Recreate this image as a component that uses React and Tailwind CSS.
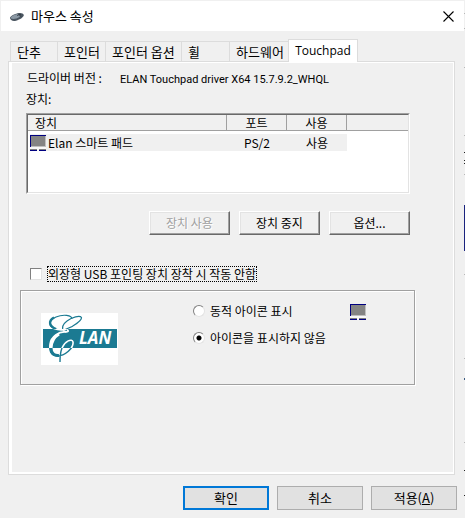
import { useState } from "react";

const tabs = [
  { name: "단추", width: "w-[47px]" },
  { name: "포인터", width: "w-[48px]" },
  { name: "포인터 옵션", width: "w-[76px]" },
  { name: "휠", width: "w-[48px]" },
  { name: "하드웨어", width: "w-[59px]" },
  { name: "Touchpad", width: "w-[70px]" },
];

// pieces of the window behind this one: [y, height, colour]
const edgeMarks = [
  [13, 1, "#b8b8b8"],
  [28, 1, "#b8b8b8"],
  [67, 1, "#b8b8b8"],
  [135, 1, "#b8b8b8"],
  [152, 1, "#222222"],
  [160, 1, "#222222"],
  [163, 1, "#222222"],
  [174, 1, "#b8b8b8"],
  [205, 46, "#1a237e"],
  [274, 1, "#b8b8b8"],
  [358, 1, "#b8b8b8"],
  [378, 2, "#3a5a80"],
  [442, 1, "#b8b8b8"],
  [470, 1, "#222222"],
  [495, 1, "#222222"],
];

function MouseIcon() {
  return (
    <svg className="w-4 h-4 shrink-0" viewBox="0 0 16 16" aria-hidden="true">
      <path d="M1 9.500C2 7.500 5 6 9 5.200C12 4.600 14.500 5.500 14.800 7C15 9 11 11.500 7 12.700C4 13.500 1 12.500 1 9.500Z" fill="#4a5560" />
      <path d="M2 9C4 7 7 6.200 9 6C11 7 11 8 10.500 9C8 10.800 4 11.500 2 10.500Z" fill="#8b98a4" />
      <path d="M9 5.600L12 8.600M8 7.500L12 6.200" stroke="#2c353e" strokeWidth="0.8" />
    </svg>
  );
}

function PadIcon() {
  return (
    <svg className="w-4 h-4 shrink-0" viewBox="0 0 16 16" shapeRendering="crispEdges" aria-hidden="true">
      <rect width="16" height="12" fill="#000080" />
      <rect x="1" y="1" width="15" height="11" fill="#c0c0c0" />
      <rect x="1" y="1" width="14" height="10" fill="#848484" />
      <rect y="12" width="16" height="4" fill="#f8f8f8" />
      <rect y="14" width="7" height="1" fill="#808080" />
      <rect x="9" y="14" width="7" height="1" fill="#808080" />
      <rect y="15" width="7" height="1" fill="#000080" />
      <rect x="9" y="15" width="7" height="1" fill="#000080" />
    </svg>
  );
}

function ElanLogo() {
  const top =
    "M31 6C31 2 22 1 15 4C8 7 7 13 13 15.500C17 17 24 17.500 30 14C35 11 41 8 40.500 4.500C39 2 31 4 26 8C22 11 20 15 23 18C26 20 29 18 26 17";
  const bottom =
    "M25 19C18 18 10 24 9 31C8 39 11 43 16 43C24 43 33 35 32 29C31 25 24 28 21 35C19 40 19 44 19 49";
  return (
    <svg className="w-[77px] h-[52px]" viewBox="0 0 77 52" role="img" aria-label="ELAN">
      <defs>
        <clipPath id="band">
          <rect x="2" y="16" width="74" height="19" />
        </clipPath>
      </defs>
      <rect width="77" height="52" fill="#ffffff" />
      <rect x="2" y="16" width="74" height="19" fill="#1b7a92" />
      <g fill="none" stroke="#1b7a92">
        <path d={top} strokeWidth="1.2" />
        <path d={bottom} strokeWidth="1.4" />
        <path d="M13 4.500C7 8 8 13 15 16" strokeWidth="2.400" />
        <path d="M10 35C10 41 14 43 18 42.500" strokeWidth="3" />
      </g>
      <g clipPath="url(#band)" fill="none" stroke="#ffffff">
        <path d={top} strokeWidth="1.6" />
        <path d={bottom} strokeWidth="1.6" />
        <path d="M18 21C13 24 10 29 10 36" strokeWidth="3" />
      </g>
      <text x="38" y="31" fill="#ffffff" fontSize="17" fontWeight="700" fontStyle="italic" fontFamily="Open Sans, sans-serif">
        LAN
      </text>
    </svg>
  );
}

function ClassicButton({ children, disabled }) {
  return (
    <button
      disabled={disabled}
      className="w-[81px] h-6 border border-t-white border-l-white border-r-[#696969] border-b-[#696969] shadow-[inset_-1px_-1px_0_#a0a0a0,inset_1px_1px_0_#e3e3e3] disabled:text-[#a0a0a0] disabled:[text-shadow:1px_1px_0_#fff]"
    >
      {children}
    </button>
  );
}

function Radio({ label, checked, onChange }) {
  return (
    <label className="flex items-center gap-[5px] h-4">
      <input
        type="radio"
        name="tray"
        checked={checked}
        onChange={onChange}
        className="appearance-none w-3 h-3 rounded-full bg-white border border-t-[#808080] border-l-[#808080] border-r-[#e3e3e3] border-b-[#e3e3e3] checked:bg-[radial-gradient(circle,#000_2px,#fff_3px)]"
      />
      {label}
    </label>
  );
}

export default function App() {
  const [tray, setTray] = useState("none");
  const [external, setExternal] = useState(false);

  return (
    <div className="flex min-h-screen bg-[#f0f0f0] text-black text-[12px] leading-4 font-['Noto_Sans_CJK_KR',sans-serif]">
      <div className="flex-1 min-w-0 pt-px pl-px">
        <header className="flex items-center h-[30px] bg-white pl-2 pr-1.5">
          <MouseIcon />
          <h1 className="ml-1.5 flex-1 text-[13px]">마우스 속성</h1>
          <button aria-label="닫기" className="p-1">
            <svg className="w-[11px] h-[11px]" viewBox="0 0 11 11" aria-hidden="true">
              <path d="M0.500 0.500L10.500 10.500M10.500 0.500L0.500 10.500" stroke="#000" strokeWidth="1.100" />
            </svg>
          </button>
        </header>

        <main className="pl-[7px] pr-[9px] pt-2">
          <nav className="flex items-end pl-0.5 -mb-px relative text-[13px]">
            {tabs.map((tab) =>
              tab.name === "Touchpad" ? (
                <button key={tab.name} className={`${tab.width} h-[23px] bg-white border border-b-0 border-[#dcdcdc] text-[12px] font-['Open_Sans',sans-serif]`}>
                  {tab.name}
                </button>
              ) : (
                <button key={tab.name} className={`${tab.width} h-[21px] pl-1.5 text-left whitespace-nowrap border border-r-0 border-[#dcdcdc]`}>
                  {tab.name}
                </button>
              )
            )}
          </nav>

          <section className="border border-[#dcdcdc] bg-white pl-[3px] pr-px pt-px pb-0.5">
            <div className="bg-[#f0f0f0] pl-2 pr-[38px] pt-[7px] pb-[87px]">
              <div className="pl-1.5">
                <p className="flex items-baseline pl-px">
                  <span className="w-[93px]">드라이버 버전 :</span>
                  <span className="text-[11px] font-['Roboto',sans-serif]">ELAN Touchpad driver X64 15.7.9.2_WHQL</span>
                </p>
                <p className="mt-[3px]">장치:</p>

                <div className="mt-1.5 mr-[5px] h-[81px] bg-white border border-t-[#a0a0a0] border-l-[#a0a0a0] border-r-white border-b-white">
                  <div className="h-full border border-t-[#696969] border-l-[#696969] border-r-[#e3e3e3] border-b-[#e3e3e3]">
                    <table className="w-full table-fixed border-separate border-spacing-0">
                      <colgroup>
                        <col className="w-[199px]" />
                        <col className="w-[60px]" />
                        <col className="w-[60px]" />
                        <col />
                      </colgroup>
                      <thead className="bg-[#f0f0f0]">
                        <tr className="h-4">
                          <th className="p-0 pl-[7px] text-left font-normal leading-[15px] border-b border-r border-[#a0a0a0]">장치</th>
                          <th className="p-0 font-normal leading-[15px] border-b border-r border-[#a0a0a0]">포트</th>
                          <th className="p-0 font-normal leading-[15px] border-b border-r border-[#a0a0a0]">사용</th>
                          <th className="p-0 border-b border-[#a0a0a0]" />
                        </tr>
                      </thead>
                      <tbody>
                        <tr className="h-[3px]"><td colSpan={4} className="p-0" /></tr>
                        <tr>
                          <td className="p-0 pl-0.5">
                            <div className="flex items-center gap-0.5 h-[17px] bg-[#f0f0f0]">
                              <PadIcon />
                              Elan 스마트 패드
                            </div>
                          </td>
                          <td className="p-0 text-center bg-[#f0f0f0]">PS/2</td>
                          <td className="p-0 text-center bg-[#f0f0f0]">사용</td>
                          <td className="p-0" />
                        </tr>
                      </tbody>
                    </table>
                  </div>
                </div>
              </div>

              <div className="flex justify-end gap-[9px] mt-[17px] mr-[5px]">
                <ClassicButton disabled>장치 사용</ClassicButton>
                <ClassicButton>장치 중지</ClassicButton>
                <ClassicButton>옵션...</ClassicButton>
              </div>

              <label className="flex items-center gap-[5px] mt-[31px] ml-2.5">
                <input
                  type="checkbox"
                  checked={external}
                  onChange={(e) => setExternal(e.target.checked)}
                  className="appearance-none w-3 h-3 bg-white border border-t-[#808080] border-l-[#808080] border-r-[#e3e3e3] border-b-[#e3e3e3] checked:bg-black"
                />
                <span className="border border-dotted border-black leading-[14px]">
                  외장형 USB 포인팅 장치 장착 시 작동 안함
                </span>
              </label>

              <div className="flex items-start mt-2 h-[95px] border border-[#a0a0a0] shadow-[1px_1px_0_#fff,inset_1px_1px_0_#fff] pl-5">
                <div className="mt-[22px]">
                  <ElanLogo />
                </div>
                <div className="ml-[75px] mt-3 flex flex-col gap-[11px]">
                  <Radio label="동적 아이콘 표시" checked={tray === "dynamic"} onChange={() => setTray("dynamic")} />
                  <Radio label="아이콘을 표시하지 않음" checked={tray === "none"} onChange={() => setTray("none")} />
                </div>
                <div className="mt-[13px] ml-6">
                  <PadIcon />
                </div>
              </div>
            </div>
          </section>
        </main>

        <footer className="flex justify-end gap-2 mt-[11px] pr-[7px] text-[13px]">
          <button className="w-[86px] h-6 bg-[#e1e1e1] border-2 border-[#0078d7]">확인</button>
          <button className="w-[86px] h-6 bg-[#e1e1e1] border border-[#adadad]">취소</button>
          <button className="w-[86px] h-6 bg-[#e1e1e1] border border-[#adadad]">
            적용(<u>A</u>)
          </button>
        </footer>
      </div>

      <svg className="w-px h-[518px] shrink-0" viewBox="0 0 1 518" shapeRendering="crispEdges" aria-hidden="true">
        {edgeMarks.map(([y, height, fill]) => (
          <rect key={y} y={y} width="1" height={height} fill={fill} />
        ))}
      </svg>
    </div>
  );
}
